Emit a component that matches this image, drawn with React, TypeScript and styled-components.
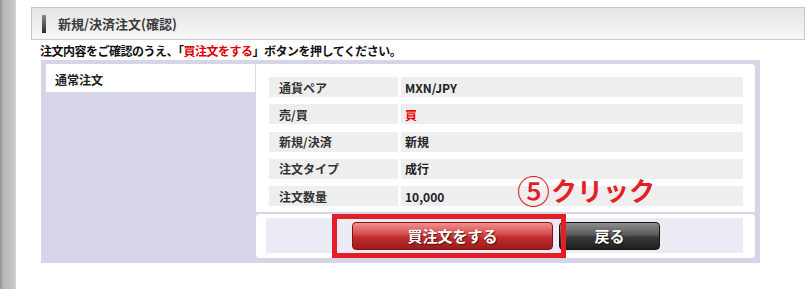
import styled, { createGlobalStyle } from "styled-components";

const GlobalStyle = createGlobalStyle`
  body {
    margin: 0;
    background: #fff;
    font-family: "Noto Sans CJK JP", "Liberation Sans", sans-serif;
    color: #222;
  }
`;

const App: React.FC = () => {
  return (
    <>
      <GlobalStyle />
      <Page>
        <SideStrip />
        <Content>
          <TitleBar>
            <Marker />
            <Title>新規/決済注文(確認)</Title>
          </TitleBar>
          <Notice>
            注文内容をご確認のうえ、「<Red>買注文をする</Red>」ボタンを押してください。
          </Notice>
          <Panel>
            <Tab>通常注文</Tab>
            <RightColumn>
              <DetailBox>
                {details.map((d) => (
                  <Row key={d.label}>
                    <Label>{d.label}</Label>
                    <Value $red={d.red}>{d.value}</Value>
                  </Row>
                ))}
              </DetailBox>
              <ActionBox>
                <ActionInner>
                  <BuyButton>買注文をする</BuyButton>
                  <BackButton>戻る</BackButton>
                </ActionInner>
                <Highlight />
                <Callout>
                  <StepNo>⑤</StepNo>クリック
                </Callout>
              </ActionBox>
            </RightColumn>
          </Panel>
        </Content>
      </Page>
    </>
  );
};

const Page = styled.div`
  display: flex;
  width: 805px;
  height: 289px;
  overflow: hidden;
`;

const SideStrip = styled.div`
  width: 16px;
  flex-shrink: 0;
  background: linear-gradient(to right, #8e8e8e 0%, #b6b6b6 18%, #c4c4c4 80%, #d6d6d6 100%);
`;

const Content = styled.div`
  flex: 1;
  padding: 7px 0 0 15px;
`;

const TitleBar = styled.div`
  display: flex;
  align-items: center;
  height: 31px;
  border: 1px solid #c9c9c9;
  background: linear-gradient(#e4e4e4, #f7f7f7);
  padding-left: 10px;
`;

const Marker = styled.div`
  width: 4px;
  height: 18px;
  background: linear-gradient(#8a8a8a, #2a2a2a);
`;

const Title = styled.div`
  margin-left: 12px;
  font-size: 13px;
  font-weight: bold;
  color: #3c3c3c;
`;

const Notice = styled.div`
  margin: 1px 0 0 9px;
  height: 19px;
  line-height: 19px;
  font-size: 12px;
  font-weight: bold;
  letter-spacing: -0.5px;
  color: #111;
`;

const Red = styled.span`
  color: #e00000;
`;

const Panel = styled.div`
  display: flex;
  align-items: flex-start;
  margin-left: 10px;
  width: 709px;
  padding: 4px 5px 5px;
  background: #d6d4e7;
`;

const Tab = styled.div`
  width: 210px;
  height: 28px;
  padding: 7px 0 0 9px;
  box-sizing: border-box;
  background: #fff;
  border-right: 1px solid #dcdcdc;
  font-size: 12px;
  font-weight: bold;
  color: #222;
`;

const RightColumn = styled.div`
  flex: 1;
  display: flex;
  flex-direction: column;
  gap: 2px;
`;

const DetailBox = styled.div`
  display: flex;
  flex-direction: column;
  gap: 7.3px;
  padding: 13px 12px 6px 13px;
  background: #fff;
  border-radius: 0 4px 0 0;
`;

const Row = styled.div`
  display: flex;
  gap: 3px;
  height: 20px;
`;

const Cell = styled.div`
  display: flex;
  align-items: center;
  background: #eeeeee;
  font-size: 12px;
  font-weight: bold;
  color: #333;
`;

const Label = styled(Cell)`
  width: 129px;
  padding-left: 10px;
  box-sizing: border-box;
`;

const Value = styled(Cell)<{ $red?: boolean }>`
  flex: 1;
  padding-left: 4px;
  color: ${(p) => (p.$red ? "#f00000" : "#222")};
`;

const ActionBox = styled.div`
  position: relative;
  padding: 4px 12px 5px 10px;
  background: #fff;
  border-radius: 4px;
`;

const ActionInner = styled.div`
  display: flex;
  justify-content: center;
  align-items: center;
  gap: 6px;
  height: 35px;
  padding-left: 3px;
  background: #ebebf5;
`;

const ButtonBase = styled.button`
  height: 28px;
  border-radius: 4px;
  font-family: "Noto Sans CJK JP", sans-serif;
  font-size: 15px;
  font-weight: bold;
  color: #fff;
  text-shadow: 1px 1px 1px rgba(0, 0, 0, 0.6);
  cursor: pointer;
  padding: 0;
`;

const BuyButton = styled(ButtonBase)`
  width: 201px;
  border: 1px solid #7c1414;
  background: linear-gradient(#f29090 0%, #d85050 40%, #bf2e2e 55%, #9e1b1b 100%);
`;

const BackButton = styled(ButtonBase)`
  width: 101px;
  border: 1px solid #151515;
  background: linear-gradient(#8e8e8e 0%, #5a5a5a 45%, #3a3a3a 55%, #1e1e1e 100%);
`;

const Highlight = styled.div`
  position: absolute;
  left: 76px;
  top: 0;
  width: 234px;
  height: 44px;
  box-sizing: border-box;
  border: 5px solid #e41e26;
  pointer-events: none;
`;

const Callout = styled.div`
  position: absolute;
  left: 261px;
  top: -41px;
  display: flex;
  align-items: center;
  gap: 1px;
  font-size: 26px;
  line-height: 34px;
  font-weight: bold;
  color: #e41e26;
  white-space: nowrap;
`;

const StepNo = styled.span`
  font-size: 33px;
  font-weight: 500;
`;

const details = [
  { label: "通貨ペア", value: "MXN/JPY" },
  { label: "売/買", value: "買", red: true },
  { label: "新規/決済", value: "新規" },
  { label: "注文タイプ", value: "成行" },
  { label: "注文数量", value: "10,000" },
];

export default App;
